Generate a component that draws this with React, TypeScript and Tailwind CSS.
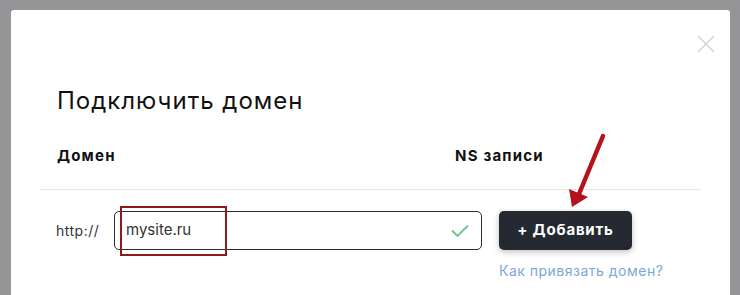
import React from "react";

export default function App() {
  return (
    <div className="w-[740px] h-[295px] bg-[#959597] overflow-hidden pt-[10px] pl-[11px]" style={{ fontFamily: 'Inter, "Open Sans", sans-serif' }}>
      <div className="relative w-[719px] h-[300px] bg-white rounded-[3px] pt-[76px]">
        <button className="absolute left-[686px] top-[25px] w-[18px] h-[18px]">
          <svg width="18" height="18" viewBox="0 0 18 18" fill="none" stroke="#cfcfcf" strokeWidth="1.2">
            <path d="M1 1L17 17M17 1L1 17" />
          </svg>
        </button>
        <h1 className="pl-[46px] text-[24px] leading-[30px] text-[#111] font-normal tracking-[1px]">Подключить домен</h1>
        <div className="flex mt-[30px] pl-[46px] text-[15px] font-bold text-[#111] leading-[20px] tracking-[1.2px]">
          <div className="w-[398px]">Домен</div>
          <div>NS записи</div>
        </div>
        <div className="ml-[29px] w-[661px] h-px bg-[#e6e6e6] mt-[23px]" />
        <div className="flex items-start mt-[21px] pl-[45px]">
          <div className="w-[58px] h-[39px] flex items-center text-[14px] text-[#333] tracking-[0.5px]">http://</div>
          <div className="relative w-[368px] h-[39px] border border-[#2d2d2d] rounded-[5px] flex items-center pl-[11px] text-[15px] text-[#333]">
            mysite.ru
            <svg className="absolute right-[12px] top-[12px]" width="18" height="13" viewBox="0 0 18 13" fill="none" stroke="#6cc38e" strokeWidth="1.8">
              <path d="M1 6.5L6.5 12L17 1.5" />
            </svg>
            <div className="absolute left-[5px] top-[-6px] w-[107px] h-[50px] border-2 border-[#8c1c1c]" />
          </div>
          <div className="ml-[17px] flex flex-col items-start">
            <button className="w-[133px] h-[39px] bg-[#252932] rounded-[5px] text-white font-bold text-[15px] tracking-[0.8px] shadow-[0_2px_6px_rgba(0,0,0,0.25)]">+ Добавить</button>
            <a className="mt-[12px] text-[14px] text-[#7aa7d8] leading-[18px] tracking-[0.5px]">Как привязать домен?</a>
          </div>
        </div>
        <svg className="absolute left-[549px] top-[122px]" width="50" height="80" viewBox="0 0 50 80">
          <path d="M43 4L19 62" stroke="#b5121b" strokeWidth="4.5" strokeLinecap="round" />
          <path d="M9 57L28 65L12 75Z" fill="#b5121b" />
        </svg>
      </div>
    </div>
  );
}
